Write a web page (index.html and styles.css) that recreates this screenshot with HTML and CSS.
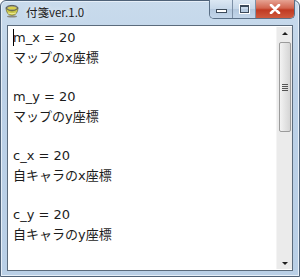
FILE: index.html
```html
<!DOCTYPE html>
<html lang="ja">
<head>
    <meta charset="UTF-8">
    <title>付箋ver.1.0</title>
    <link rel="stylesheet" href="styles.css">
</head>
<body>
    <div class="window">
        <div class="titlebar">
            <svg class="app-icon" width="15" height="14" viewBox="0 0 15 14">
                <ellipse cx="7" cy="4" rx="6" ry="2.6" fill="#8a8a80" stroke="#4a4a44" stroke-width="0.8"/>
                <ellipse cx="7" cy="4" rx="4.4" ry="1.6" fill="#d8d04a"/>
                <path d="M1 4.5 Q1.5 11 7 11.5 Q12.5 11 13 4.5 Q10 7 7 7 Q4 7 1 4.5Z" fill="#c8c64a" stroke="#6a6a40" stroke-width="0.7"/>
                <path d="M3 9 Q7 10.5 11 9" stroke="#f0ec9a" stroke-width="1" fill="none"/>
                <ellipse cx="7" cy="12.6" rx="5" ry="1" fill="#8a8a80"/>
            </svg>
            <span class="title">付箋ver.1.0</span>
            <div class="caption-buttons">
                <div class="cap-btn cap-min"><span class="min-glyph"></span></div>
                <div class="cap-btn cap-max"><span class="max-glyph"></span></div>
                <div class="cap-btn cap-close">
                    <svg width="12" height="10" viewBox="0 0 12 10">
                        <path d="M2 1 L10 9 M10 1 L2 9" stroke="#ffffff" stroke-width="2.6" stroke-linecap="round"/>
                        <path d="M2 1 L10 9 M10 1 L2 9" stroke="#ffffff" stroke-width="1.4"/>
                    </svg>
                </div>
            </div>
        </div>
        <div class="client">
            <div class="memo">
                <p><span class="caret"></span>m_x = 20</p>
                <p>マップのx座標</p>
                <p>&nbsp;</p>
                <p>m_y = 20</p>
                <p>マップのy座標</p>
                <p>&nbsp;</p>
                <p>c_x = 20</p>
                <p>自キャラのx座標</p>
                <p>&nbsp;</p>
                <p>c_y = 20</p>
                <p>自キャラのy座標</p>
            </div>
            <div class="scrollbar">
                <div class="arrow arrow-up"></div>
                <div class="thumb"><span class="grip"></span></div>
                <div class="track"></div>
                <div class="arrow arrow-down"></div>
            </div>
        </div>
    </div>
</body>
</html>
```

FILE: styles.css
```css
body {
    margin: 0;
    background: #ffffff;
    font-family: 'DejaVu Sans', 'Noto Sans CJK JP', sans-serif;
}

.window {
    width: 300px;
    height: 277px;
    box-sizing: border-box;
    border: 1px solid #4f6278;
    border-radius: 6px 6px 0 0;
    background: linear-gradient(180deg, #c9dbec 0%, #bcd1e7 30%, #b9cfe6 100%);
    box-shadow: inset 0 0 0 1px #e6eff8;
    display: flex;
    flex-direction: column;
}

.titlebar {
    height: 24px;
    display: flex;
    align-items: flex-start;
    padding-left: 4px;
}

.app-icon {
    margin-top: 3px;
}

.title {
    margin-left: 6px;
    margin-top: 3px;
    font-family: 'Noto Sans CJK JP', 'DejaVu Sans', sans-serif;
    font-size: 11.5px;
    color: #1b1b1b;
    text-shadow: 0 0 6px rgba(255, 255, 255, 0.9);
}

.caption-buttons {
    margin-left: auto;
    margin-right: 4px;
    display: flex;
    height: 18px;
    margin-top: -1px;
    border: 1px solid #5a6f86;
    border-top: none;
    border-radius: 0 0 5px 5px;
    overflow: hidden;
}

.cap-btn {
    display: flex;
    align-items: center;
    justify-content: center;
}

.cap-min,
.cap-max {
    width: 22px;
    background: linear-gradient(180deg, #dbe7f3 0%, #c6d7e9 50%, #b4c8de 51%, #c3d6ea 100%);
    border-right: 1px solid #7d90a6;
}

.min-glyph {
    width: 9px;
    height: 2px;
    margin-top: 4px;
    background: #ffffff;
    border: 1px solid #3c4a5a;
}

.max-glyph {
    width: 7px;
    height: 5px;
    border: 1px solid #3c4a5a;
    border-top-width: 2px;
    box-shadow: 0 0 0 1px #ffffff;
}

.cap-close {
    width: 38px;
    background: linear-gradient(180deg, #e6a393 0%, #d2654f 45%, #c03a22 55%, #cf5a3e 100%);
}

.client {
    flex: 1;
    margin: 0 6px 5px 6px;
    border: 1px solid #5b6b7c;
    background: #ffffff;
    display: flex;
}

.memo {
    flex: 1;
    padding: 2px 0 0 5px;
    font-size: 13px;
    line-height: 19.67px;
    color: #1c1c1c;
}

.memo p {
    margin: 0;
    white-space: pre;
}

.caret {
    display: inline-block;
    width: 1px;
    height: 17px;
    background: #000000;
    vertical-align: -4px;
    margin-right: -1px;
}

.scrollbar {
    width: 15px;
    margin: 1px 0 1px 0;
    background: #ebebeb;
    border-left: 1px solid #f4f4f4;
    display: flex;
    flex-direction: column;
    align-items: center;
}

.arrow {
    height: 14px;
    width: 100%;
    position: relative;
}

.arrow::after {
    content: '';
    position: absolute;
    left: 5px;
    border-left: 3px solid transparent;
    border-right: 3px solid transparent;
}

.arrow-up::after {
    top: 5px;
    border-bottom: 3px solid #1f1f1f;
}

.arrow-down::after {
    top: 7px;
    border-top: 3px solid #1f1f1f;
}

.thumb {
    width: 10px;
    height: 88px;
    margin-top: 1px;
    border: 1px solid #9b9b9b;
    border-radius: 2px;
    background: linear-gradient(90deg, #f3f3f3 0%, #e4e4e4 50%, #d6d6d6 100%);
    display: flex;
    align-items: center;
    justify-content: center;
}

.grip {
    width: 6px;
    height: 7px;
    background: repeating-linear-gradient(180deg, #555555 0, #555555 1px, transparent 1px, transparent 2px);
}

.track {
    flex: 1;
}
```
